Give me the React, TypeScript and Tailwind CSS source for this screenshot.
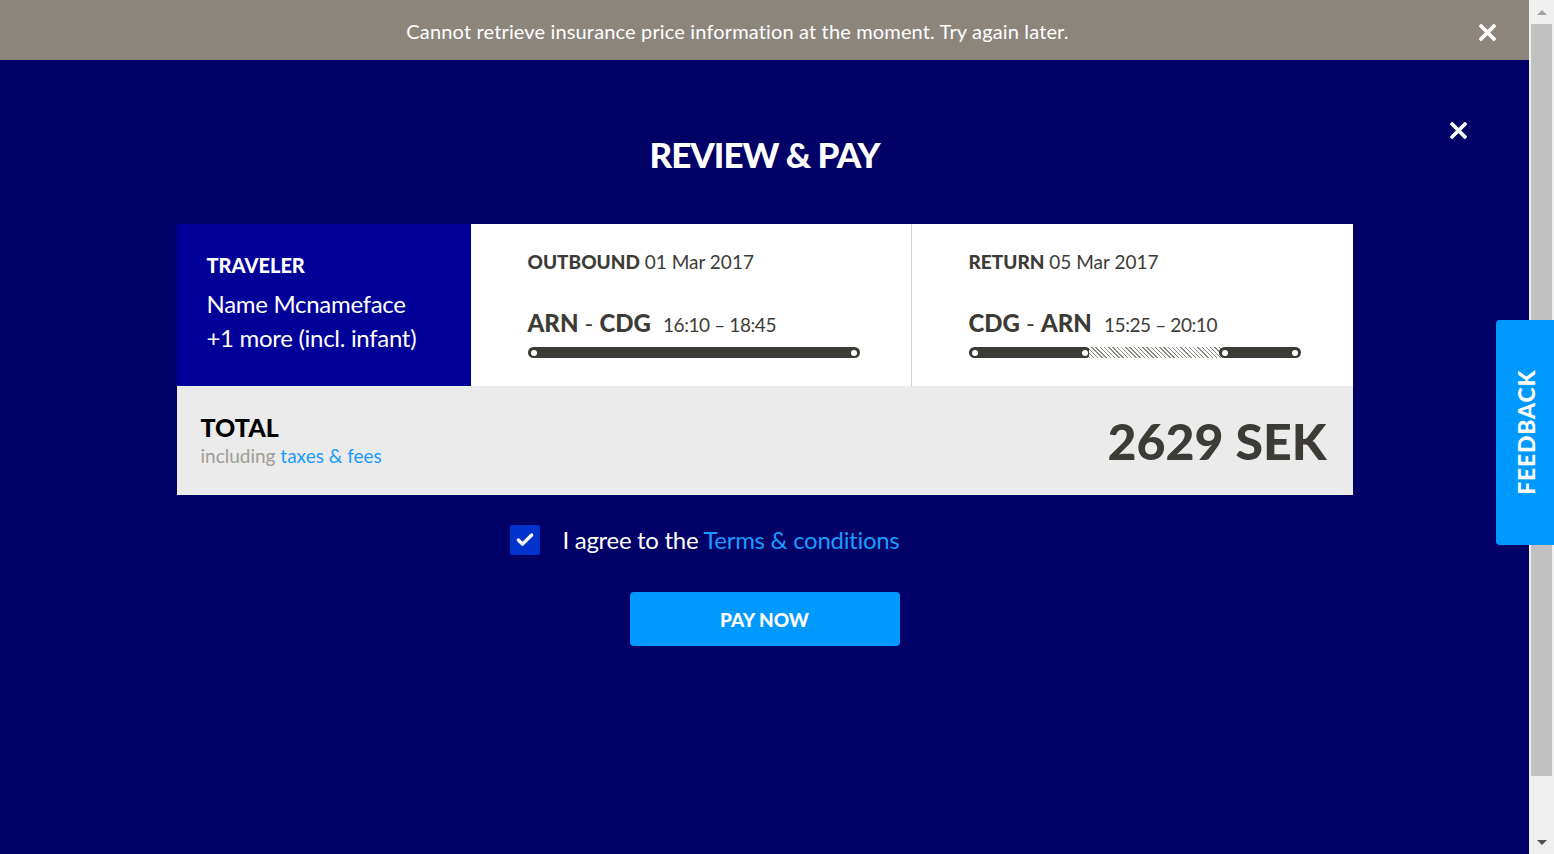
import { Check } from "lucide-react";

function CloseIcon({ size }: { size: number }) {
  return (
    <svg width={size} height={size} viewBox="0 0 16 16" fill="none">
      <path d="M2 2 L14 14 M14 2 L2 14" stroke="#fff" strokeWidth="3.4" strokeLinecap="square" />
    </svg>
  );
}

function Dot() {
  return <span className="block h-[6px] w-[6px] rounded-full bg-white" />;
}

function Segment({ className }: { className: string }) {
  return (
    <div className={`flex h-[11px] items-center justify-between rounded-full bg-[#3d3b36] px-[3px] ${className}`}>
      <Dot />
      <Dot />
    </div>
  );
}

export default function App() {
  return (
    <div className="relative flex h-screen w-full overflow-hidden font-['Lato',sans-serif]">
      <div className="flex flex-1 flex-col">
        <div className="relative flex h-[60px] items-center justify-center bg-[#8b857c] text-[20px] tracking-[0.15px] text-white">
          <span className="-ml-[54px] pt-[2px]">Cannot retrieve insurance price information at the moment. Try again later.</span>
          <button className="absolute right-[33px] top-[24px]">
            <CloseIcon size={17} />
          </button>
        </div>

        <div className="relative flex flex-1 flex-col items-center bg-[#000066] pt-[74px]">
          <button className="absolute right-[62px] top-[62px]">
            <CloseIcon size={17} />
          </button>
          <h1 className="text-[35px] font-black leading-[40px] tracking-[-1px] text-white">REVIEW &amp; PAY</h1>

          <div className="mt-[50px] w-[1176px]">
            <div className="flex h-[162px]">
              <div className="w-[294px] bg-[#000099] pl-[30px] pt-[29px] text-white">
                <div className="text-[20px] font-black leading-[24px]">TRAVELER</div>
                <div className="mt-[10px] text-[24px] tracking-[-0.3px] leading-[34px]">Name Mcnameface</div>
                <div className="text-[24px] tracking-[-0.3px] leading-[34px]">+1 more (incl. infant)</div>
              </div>
              <div className="w-[441px] border-r border-[#d4d4d4] bg-white pl-[57px] pt-[26px] text-[#3d3b36]">
                <div className="text-[19px] leading-[24px]">
                  <span className="font-black">OUTBOUND</span> 01 Mar 2017
                </div>
                <div className="mt-[34px] flex items-baseline text-[24px] leading-[30px]">
                  <span className="font-black">ARN</span>
                  <span className="mx-[6px]">-</span>
                  <span className="font-black">CDG</span>
                  <span className="ml-[12px] text-[19px] tracking-[-0.4px]">16:10 – 18:45</span>
                </div>
                <div className="mt-[7px] flex w-[332px]">
                  <Segment className="flex-1" />
                </div>
              </div>
              <div className="flex-1 bg-white pl-[57px] pt-[26px] text-[#3d3b36]">
                <div className="text-[19px] leading-[24px]">
                  <span className="font-black">RETURN</span> 05 Mar 2017
                </div>
                <div className="mt-[34px] flex items-baseline text-[24px] leading-[30px]">
                  <span className="font-black">CDG</span>
                  <span className="mx-[6px]">-</span>
                  <span className="font-black">ARN</span>
                  <span className="ml-[12px] text-[19px] tracking-[-0.4px]">15:25 – 20:10</span>
                </div>
                <div className="mt-[7px] flex w-[332px] items-center">
                  <Segment className="w-[122px] shrink-0" />
                  <div className="-mx-[2px] h-[11px] flex-1 bg-[repeating-linear-gradient(45deg,#8f8b84_0px,#8f8b84_1px,#ffffff_1px,#ffffff_3px)]" />
                  <Segment className="w-[82px] shrink-0" />
                </div>
              </div>
            </div>

            <div className="flex h-[109px] items-center justify-between bg-[#ebebeb] pl-[24px] pr-[26px]">
              <div>
                <div className="text-[25px] font-black leading-[28px] text-black">TOTAL</div>
                <div className="mt-[2px] text-[19px] leading-[26px] text-[#a09c96]">
                  including <span className="text-[#1a9bff]">taxes &amp; fees</span>
                </div>
              </div>
              <div className="text-[50px] font-black leading-none text-[#3d3b36]">2629 SEK</div>
            </div>
          </div>

          <div className="mt-[29px] flex w-[510px] items-center">
            <span className="flex h-[30px] w-[30px] items-center justify-center rounded-[2px] bg-[#0033cc]">
              <Check size={20} strokeWidth={4} color="#fff" />
            </span>
            <span className="ml-[23px] text-[24px] tracking-[-0.3px] leading-[32px] text-white">
              I agree to the <span className="text-[#1a9bff]">Terms &amp; conditions</span>
            </span>
          </div>

          <button className="mt-[36px] flex h-[54px] w-[270px] items-center justify-center rounded-[4px] bg-[#0099ff] pt-[2px] text-[19px] font-black text-white">
            PAY NOW
          </button>
        </div>
      </div>

      <div className="flex w-[25px] flex-col items-center bg-[#f0f0f0]">
        <div className="flex h-[24px] items-center">
          <span className="block h-0 w-0 border-x-[5px] border-b-[5px] border-x-transparent border-b-[#a3a3a3]" />
        </div>
        <div className="w-[21px] flex-1 bg-[#c1c1c1]" />
        <div className="h-[54px]" />
        <div className="flex h-[24px] items-center">
          <span className="block h-0 w-0 border-x-[5px] border-t-[5px] border-x-transparent border-t-[#505050]" />
        </div>
      </div>

      <div className="absolute right-0 top-[320px] flex h-[225px] w-[58px] items-center justify-center rounded-l-[4px] bg-[#0099ff] pl-[4px]">
        <span className="-rotate-90 whitespace-nowrap text-[23px] font-black tracking-[0.8px] text-white">FEEDBACK</span>
      </div>
    </div>
  );
}
